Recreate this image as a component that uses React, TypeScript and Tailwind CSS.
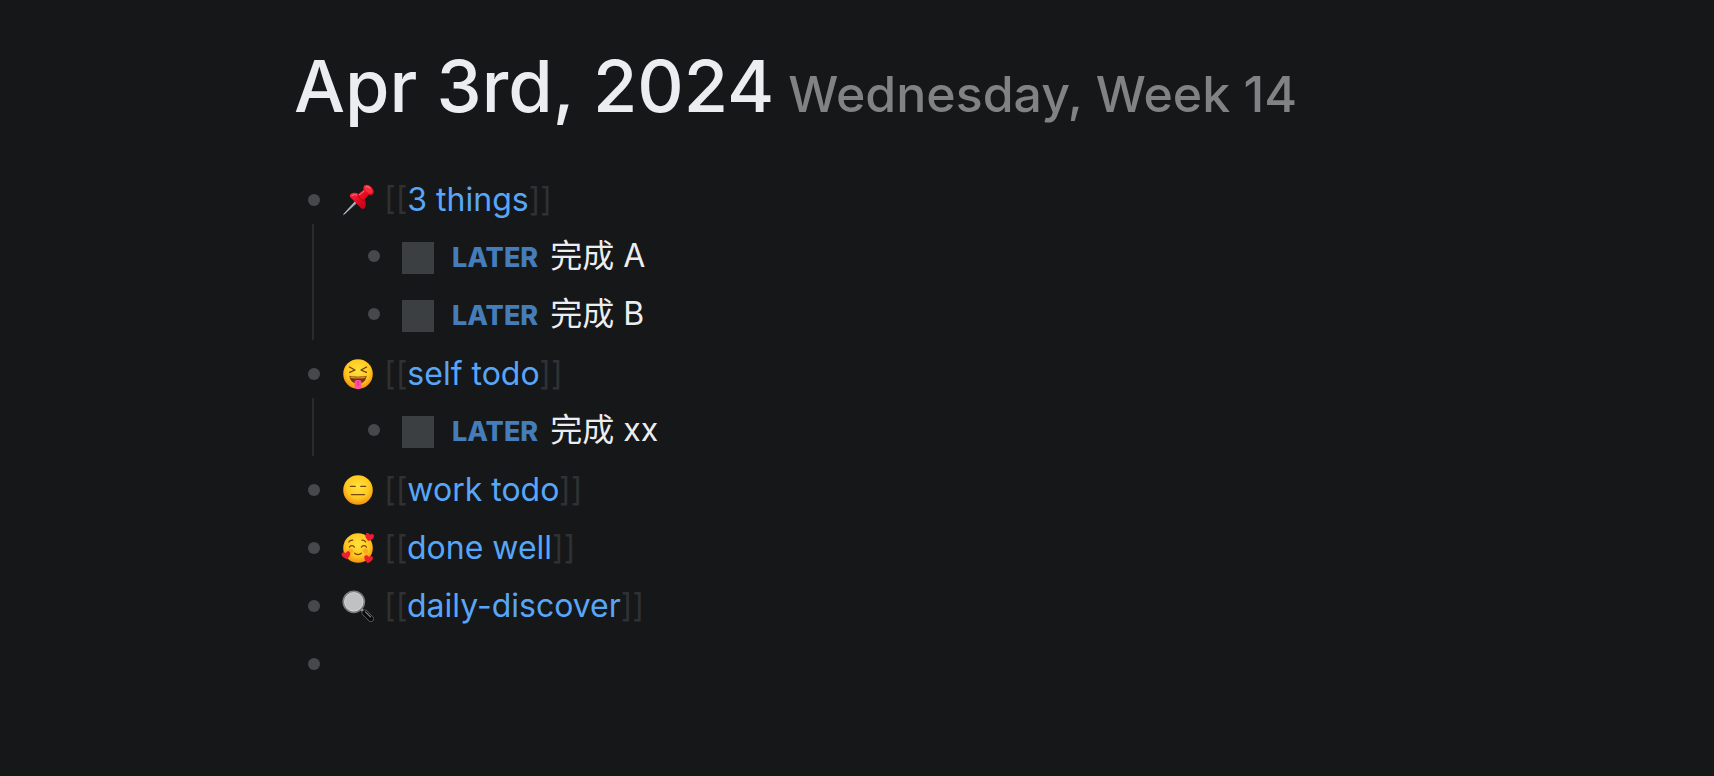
import type { ReactNode } from "react";

type Task = { label: string };
type Block = { id: string; icon?: ReactNode; page?: string; tasks?: Task[] };

function Pushpin() {
  return (
    <svg viewBox="0 0 32 32" className="size-8" role="img" aria-label="pushpin">
      <defs>
        <linearGradient id="pin" x1="0" y1="0" x2="1" y2="1">
          <stop offset="0" stopColor="#ff3b4e" />
          <stop offset="0.55" stopColor="#e3081f" />
          <stop offset="1" stopColor="#a30012" />
        </linearGradient>
      </defs>
      <path d="M13.6 16.6 15.6 18.6 2.4 30.6 1 31.4 1.6 29.8Z" fill="#8d9aa0" />
      <path d="M14.2 17.2 2.2 30" stroke="#c9d3d6" strokeWidth="0.8" />
      <path
        d="M9 9.8c2.6-1.5 5.6-1.2 7.6.2l5-4.2c-.6-1.8-.4-3.4.8-4.4 1.6-1.4 4.7-.6 7 1.7s3.2 5.5 1.7 7c-1 1.1-2.6 1.2-4.3.6l-4.3 5c1.5 2.6 1.7 5.9.2 8.3-.8 1.3-2.3 1.3-3.6.3L8.6 13.6C7.4 12.2 7.6 10.6 9 9.8Z"
        fill="url(#pin)"
      />
      <ellipse cx="26.6" cy="5.6" rx="4.8" ry="2.9" transform="rotate(45 26.6 5.6)" fill="#f52a3d" />
      <path d="M23.8 3c.8-.9 2.7-.4 4.2.9" stroke="#ff8c93" strokeWidth="0.9" fill="none" strokeLinecap="round" />
      <path d="M17.3 10.8 22 7.2M10 11.4c1.5-1 3.3-.9 4.8-.2" stroke="#ff7580" strokeWidth="1" fill="none" strokeLinecap="round" />
      <path d="M16 11c1.2 3 3.3 5 6 5.6" stroke="#b00519" strokeWidth="1" fill="none" />
    </svg>
  );
}

function FaceBase({ id }: { id: string }) {
  return (
    <>
      <defs>
        <radialGradient id={id} cx="0.5" cy="0.38" r="0.66">
          <stop offset="0" stopColor="#ffe13c" />
          <stop offset="0.6" stopColor="#ffc81f" />
          <stop offset="1" stopColor="#f3860c" />
        </radialGradient>
      </defs>
      <circle cx="16" cy="16" r="14.8" fill={`url(#${id})`} />
    </>
  );
}

function SquintingFace() {
  return (
    <svg viewBox="0 0 32 32" className="size-8" role="img" aria-label="squinting face with tongue">
      <FaceBase id="squint" />
      <path
        d="M7.4 9 13 12 7.6 14.4M24.6 9 19 12 24.4 14.4"
        stroke="#6b3a08"
        strokeWidth="1.2"
        fill="none"
        strokeLinecap="round"
        strokeLinejoin="round"
      />
      <path d="M7.4 17.8c3 1.2 14.2 1.2 17.2 0-.4 4.9-3.8 8-8.6 8S7.8 22.7 7.4 17.8Z" fill="#74320b" />
      <path d="M8.2 18.4c3.5 1 12.1 1 15.6 0l-.4 1.5c-4 .7-10.8.7-14.8 0Z" fill="#d98a3c" />
      <path d="M12.6 23c1.1-1.3 5.7-1.3 6.8 0v4.8c0 2.2-1.3 3.4-3.4 3.4s-3.4-1.2-3.4-3.4Z" fill="#ff4fa3" />
      <path d="M16 23.4v4" stroke="#d42a7c" strokeWidth="0.9" strokeLinecap="round" />
    </svg>
  );
}

function ExpressionlessFace() {
  return (
    <svg viewBox="0 0 32 32" className="size-8" role="img" aria-label="expressionless face">
      <FaceBase id="flat" />
      <path d="M8.4 12.4H13.2M18.8 12.4H23.6M9.4 20.6H22.6" stroke="#75480b" strokeWidth="1.3" strokeLinecap="round" />
    </svg>
  );
}

function Heart({ transform }: { transform: string }) {
  return (
    <path
      transform={transform}
      d="M0 4.2C-3.2 2-4.6.3-4.3-1.7-4-3.7-1.3-4.2 0-2c1.3-2.2 4-1.7 4.3.3C4.6.3 3.2 2 0 4.2Z"
      fill="#ee1c35"
    />
  );
}

function HeartsFace() {
  return (
    <svg viewBox="0 0 32 32" className="size-8 overflow-visible" role="img" aria-label="smiling face with hearts">
      <FaceBase id="hearts" />
      <path
        d="M6.8 10c.8-1.3 2.4-2 4-1.8M20 8.2c1.5-.1 2.8.5 3.6 1.6M7.4 15.2c.8-2 4.2-2 5 0M19.4 15.2c.8-2 4.2-2 5 0M12.6 21.2c1.5 1.8 5.3 1.8 6.8 0"
        stroke="#75420b"
        strokeWidth="1.2"
        fill="none"
        strokeLinecap="round"
      />
      <circle cx="8.5" cy="19" r="2.6" fill="#ff8426" opacity="0.5" />
      <circle cx="23.5" cy="19" r="2.6" fill="#ff8426" opacity="0.5" />
      <Heart transform="translate(27.4 5) rotate(12)" />
      <Heart transform="translate(4.2 23.2) rotate(-14)" />
      <Heart transform="translate(26.4 27) rotate(10)" />
    </svg>
  );
}

function Magnifier() {
  return (
    <svg viewBox="0 0 32 32" className="size-8" role="img" aria-label="magnifying glass">
      <path d="M19 19 23.5 23.5" stroke="#9a9c9e" strokeWidth="2.6" />
      <path d="M22.8 22.8 28.8 28.8" stroke="#606366" strokeWidth="6.2" strokeLinecap="round" />
      <path d="M22.8 22.8 28.8 28.8" stroke="#08090a" strokeWidth="4.8" strokeLinecap="round" />
      <path d="M23.4 21.8 28.6 27" stroke="#808385" strokeWidth="1.1" strokeLinecap="round" />
      <circle cx="11.8" cy="11.8" r="10.4" fill="#bfc1c3" stroke="#7b7d7f" strokeWidth="2" />
      <circle cx="11.8" cy="11.8" r="9.2" fill="none" stroke="#dcdedf" strokeWidth="0.8" />
    </svg>
  );
}

const BLOCKS: Block[] = [
  { id: "things", icon: <Pushpin />, page: "3 things", tasks: [{ label: "完成 A" }, { label: "完成 B" }] },
  { id: "self", icon: <SquintingFace />, page: "self todo", tasks: [{ label: "完成 xx" }] },
  { id: "work", icon: <ExpressionlessFace />, page: "work todo" },
  { id: "done", icon: <HeartsFace />, page: "done well" },
  { id: "discover", icon: <Magnifier />, page: "daily-discover" },
  { id: "empty" },
];

function Bullet() {
  return <span className="size-3 shrink-0 rounded-full bg-[#46494b]" />;
}

function PageRef({ name }: { name: string }) {
  return (
    <span className="whitespace-nowrap">
      <span className="text-[#2f3133]">[[</span>
      <a href="#" className="text-[#58a6f8]">
        {name}
      </a>
      <span className="text-[#2f3133]">]]</span>
    </span>
  );
}

function TaskRow({ task }: { task: Task }) {
  return (
    <li className="flex h-[58px] items-center pt-1.5">
      <Bullet />
      <label className="ml-[22px] flex items-center">
        <input type="checkbox" className="mt-1 size-8 shrink-0 appearance-none bg-[#3c3f41]" />
        <span className="ml-[18px] flex items-baseline gap-3 pt-0.5 whitespace-nowrap">
          <span className="text-[27px] font-extrabold text-[#447db9]">LATER</span>
          <span>{task.label}</span>
        </span>
      </label>
    </li>
  );
}

function BlockItem({ block }: { block: Block }) {
  return (
    <li>
      <div className="flex h-[58px] items-center pt-2.5">
        <Bullet />
        {block.page && (
          <div className="ml-[22px] flex items-center gap-2.5">
            {block.icon}
            <PageRef name={block.page} />
          </div>
        )}
      </div>
      {block.tasks && (
        <ul className="ml-1 border-l-2 border-[#292b2d] pl-[54px]">
          {block.tasks.map((task) => (
            <TaskRow key={task.label} task={task} />
          ))}
        </ul>
      )}
    </li>
  );
}

export default function App() {
  return (
    <main className="min-h-screen bg-[#161719] pt-10 pl-[294px] font-['Inter','Noto_Sans_CJK_SC',sans-serif] text-[32px] leading-[48px] text-[#ecedf0]">
      <h1 className="flex items-baseline gap-3.5 text-[72px] leading-[92px] font-medium whitespace-nowrap">
        Apr 3rd, 2024
        <small className="text-[50px] text-[#818284]">Wednesday, Week 14</small>
      </h1>
      <ul className="mt-[26px] ml-3.5">
        {BLOCKS.map((block) => (
          <BlockItem key={block.id} block={block} />
        ))}
      </ul>
    </main>
  );
}
